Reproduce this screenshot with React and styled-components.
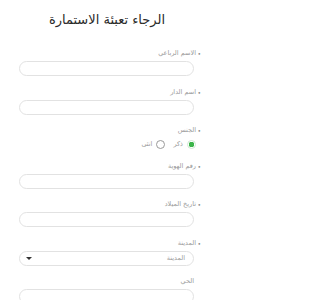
import React, { useState } from 'react';
import styled, { createGlobalStyle } from 'styled-components';

const GlobalStyle = createGlobalStyle`
    * { box-sizing: border-box; }
    body {
        margin: 0;
        background: #fff;
        font-family: "DejaVu Sans", "Noto Sans", sans-serif;
    }
`

const fields = [
    { name: 'fullName', label: 'الاسم الرباعي' },
    { name: 'house', label: 'اسم الدار' },
]

const moreFields = [
    { name: 'idNumber', label: 'رقم الهوية' },
    { name: 'birthDate', label: 'تاريخ الميلاد' },
]

const App = () => {
    const [ gender, setGender ] = useState('male');

    return (
        <>
            <GlobalStyle />
            <Page dir="rtl">
                <Title>الرجاء تعبئة الاستمارة</Title>
                <Form>
                    {fields.map((f) => (
                        <Field key={f.name}>
                            <Label bullet>{f.label}</Label>
                            <TextInput name={f.name} />
                        </Field>
                    ))}
                    <Field>
                        <Label bullet>الجنس</Label>
                        <RadioRow>
                            <RadioOption>
                                <Radio
                                    type="radio"
                                    name="gender"
                                    checked={gender === 'male'}
                                    onChange={() => setGender('male')}
                                />
                                ذكر
                            </RadioOption>
                            <RadioOption>
                                <Radio
                                    type="radio"
                                    name="gender"
                                    checked={gender === 'female'}
                                    onChange={() => setGender('female')}
                                />
                                انثى
                            </RadioOption>
                        </RadioRow>
                    </Field>
                    {moreFields.map((f) => (
                        <Field key={f.name}>
                            <Label bullet>{f.label}</Label>
                            <TextInput name={f.name} />
                        </Field>
                    ))}
                    <Field>
                        <Label bullet>المدينة</Label>
                        <SelectBox>
                            <span>المدينة</span>
                            <Arrow />
                        </SelectBox>
                    </Field>
                    <Field>
                        <Label>الحي</Label>
                        <TextInput name="district" />
                    </Field>
                </Form>
            </Page>
        </>
    )
}

export default App;


const Page = styled.div`
    width: 214px;
    padding-top: 10px;
`

const Title = styled.h1`
    margin: 0 0 19px;
    text-align: center;
    font-size: 13px;
    line-height: 20px;
    font-weight: 500;
    color: #2a2a2a;
`

const Form = styled.form`
    display: flex;
    flex-direction: column;
    gap: 11.5px;
    padding: 0 20px 0 19px;
`

const Field = styled.div`
    display: flex;
    flex-direction: column;
`

const Label = styled.label`
    position: relative;
    display: block;
    height: 9px;
    margin: 0 ${(p) => (p.bullet ? '-2px' : '0')} 3px 0;
    font-size: 6.5px;
    line-height: 9px;
    color: #999;

    &::before {
        content: ${(p) => (p.bullet ? '"•"' : 'none')};
        position: absolute;
        right: -5px;
        top: 0;
        font-size: 6px;
        color: #888;
    }
`

const TextInput = styled.input`
    width: 100%;
    height: 15px;
    border: 1px solid #e2e2e2;
    border-radius: 8px;
    background: #fff;
    outline: none;
    padding: 0 8px;
`

const RadioRow = styled.div`
    display: flex;
    align-items: center;
    gap: 8px;
    height: 12px;
    margin-right: -2px;
`

const RadioOption = styled.label`
    display: flex;
    align-items: center;
    gap: 4px;
    font-size: 6.5px;
    color: #999;
`

const Radio = styled.input`
    appearance: none;
    margin: 0;
    width: 9px;
    height: 9px;
    border-radius: 50%;
    border: 1px solid #9a9a9a;
    background: #fff;

    &:checked {
        border-color: #cfe9d2;
        background: radial-gradient(circle, #3cb54a 0 2.6px, #fff 3px);
    }
`

const SelectBox = styled.div`
    display: flex;
    align-items: center;
    justify-content: space-between;
    height: 15px;
    border: 1px solid #e2e2e2;
    border-radius: 8px;
    padding: 0 8px 0 6px;
    font-size: 6.5px;
    color: #9a9a9a;
`

const Arrow = styled.span`
    width: 0;
    height: 0;
    border-left: 3px solid transparent;
    border-right: 3px solid transparent;
    border-top: 3px solid #333;
`
